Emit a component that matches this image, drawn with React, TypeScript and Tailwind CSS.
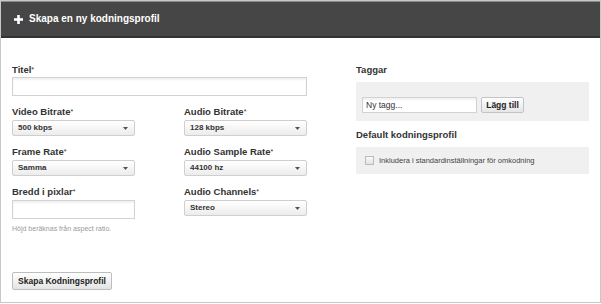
import React from 'react';

const font = { fontFamily: '"Liberation Sans", Arial, sans-serif' };

function Label({ children }: { children: React.ReactNode }) {
  return (
    <div className="h-[12px] text-[9.5px] leading-[12px] font-bold text-[#333]">
      {children}
      <span className="text-[7px] align-top font-normal">*</span>
    </div>
  );
}

function Select({ value, className = '' }: { value: string; className?: string }) {
  return (
    <div
      className={`flex items-center justify-between h-[16px] border border-[#cfcfcf] rounded-[2px] bg-gradient-to-b from-white to-[#ececec] pl-[5px] pr-[6px] ${className}`}
    >
      <span className="text-[8px] leading-none font-bold text-[#333]">{value}</span>
      <svg width="5" height="3" viewBox="0 0 5 3">
        <path d="M0 0h5L2.5 3z" fill="#555" />
      </svg>
    </div>
  );
}

function TextInput({ className = '', placeholder }: { className?: string; placeholder?: string }) {
  return (
    <div
      className={`flex items-center border border-[#d2d2d2] bg-white shadow-[inset_0_2px_2px_rgba(0,0,0,0.06)] pl-[3px] ${className}`}
    >
      {placeholder && <span className="text-[8.5px] leading-none text-[#333]">{placeholder}</span>}
    </div>
  );
}

export default function App() {
  return (
    <div style={font} className="w-[601px] h-[303px] border border-[#c8c8c8] bg-white flex flex-col">
      {/* header */}
      <div className="h-[37px] bg-[#464646] border-t border-[#8a8a8a] border-b-2 border-b-[#333] flex items-center pl-[13px] gap-[6px]">
        <svg width="9" height="9" viewBox="0 0 9 9">
          <rect x="3.2" y="0" width="2.6" height="9" fill="#fff" />
          <rect x="0" y="3.2" width="9" height="2.6" fill="#fff" />
        </svg>
        <span className="text-[10px] leading-none font-bold text-white">Skapa en ny kodningsprofil</span>
      </div>

      {/* body */}
      <div className="flex pt-[26px] pl-[11px]">
        {/* left column */}
        <div className="w-[295px] flex flex-col">
          <Label>Titel</Label>
          <TextInput className="mt-[1px] h-[19px] w-[295px]" />

          <div className="grid grid-cols-[172px_123px] mt-[10px]">
            <div>
              <Label>Video Bitrate</Label>
              <Select value="500 kbps" className="mt-[2px] w-[123px]" />
            </div>
            <div>
              <Label>Audio Bitrate</Label>
              <Select value="128 kbps" className="mt-[2px] w-[123px]" />
            </div>
          </div>

          <div className="grid grid-cols-[172px_123px] mt-[10px]">
            <div>
              <Label>Frame Rate</Label>
              <Select value="Samma" className="mt-[2px] w-[123px]" />
            </div>
            <div>
              <Label>Audio Sample Rate</Label>
              <Select value="44100 hz" className="mt-[2px] w-[123px]" />
            </div>
          </div>

          <div className="grid grid-cols-[172px_123px] mt-[10px]">
            <div>
              <Label>Bredd i pixlar</Label>
              <TextInput className="mt-[2px] h-[19px] w-[123px]" />
              <div className="mt-[4px] text-[7px] leading-[12px] text-[#9a9a9a]">Höjd beräknas från aspect ratio.</div>
            </div>
            <div>
              <Label>Audio Channels</Label>
              <Select value="Stereo" className="mt-[2px] w-[123px]" />
            </div>
          </div>

          <div className="mt-[32px]">
            <button className="h-[18px] w-[100px] border border-[#bdbdbd] rounded-[2px] bg-gradient-to-b from-white to-[#e4e4e4] text-[8.5px] leading-none font-bold text-[#222]">
              Skapa Kodningsprofil
            </button>
          </div>
        </div>

        {/* right column */}
        <div className="ml-[49px] w-[233px] flex flex-col">
          <div className="h-[12px] text-[9.5px] leading-[12px] font-bold text-[#333]">Taggar</div>
          <div className="mt-[6px] h-[39px] bg-[#f0f0f0] flex items-start pt-[15px] pl-[6px] gap-[4px]">
            <TextInput className="h-[16px] w-[115px]" placeholder="Ny tagg..." />
            <button className="h-[16px] w-[43px] border border-[#c4c4c4] rounded-[2px] bg-gradient-to-b from-white to-[#e6e6e6] text-[8.5px] leading-none font-bold text-[#222]">
              Lägg till
            </button>
          </div>

          <div className="mt-[8px] h-[12px] text-[9.5px] leading-[12px] font-bold text-[#333]">Default kodningsprofil</div>
          <div className="mt-[6px] h-[27px] bg-[#f0f0f0] flex items-center pl-[9px] gap-[5px]">
            <div className="w-[9px] h-[9px] border border-[#bcbcbc] bg-gradient-to-b from-[#fafafa] to-[#e2e2e2]" />
            <span className="text-[7.5px] leading-none text-[#444]">Inkludera i standardinställningar för omkodning</span>
          </div>
        </div>
      </div>
    </div>
  );
}
